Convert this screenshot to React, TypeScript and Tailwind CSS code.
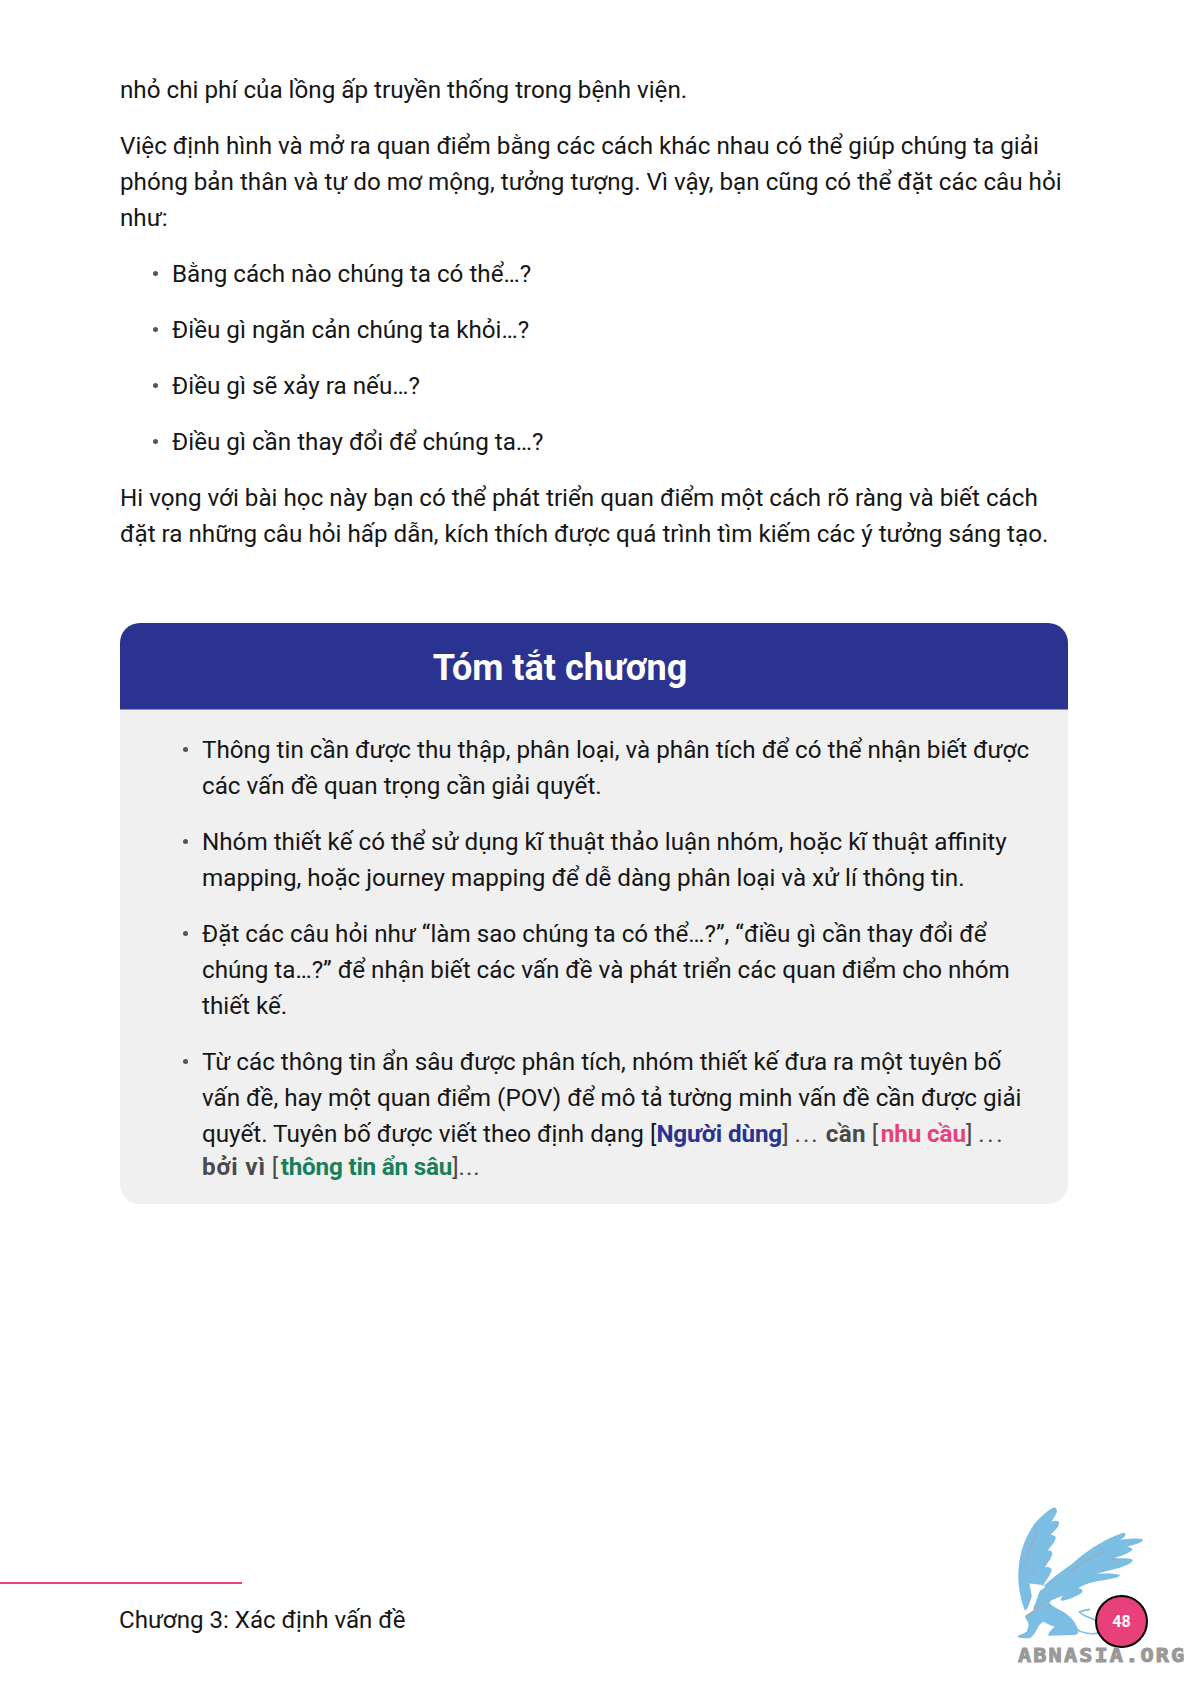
const bullets1 = [
  "Bằng cách nào chúng ta có thể…?",
  "Điều gì ngăn cản chúng ta khỏi…?",
  "Điều gì sẽ xảy ra nếu…?",
  "Điều gì cần thay đổi để chúng ta…?",
];

function Griffin() {
  return (
    <svg viewBox="0 0 633 612" className="absolute right-0 bottom-0 w-[211px] h-[204px]">
      <path fill="#7cbde3" d="M135 392 C118 350 112 300 116 265 C120 215 135 170 165 130 C185 108 205 90 222 82 C232 84 234 94 226 106 L215 125 C228 120 240 122 237 132 C234 145 222 152 212 165 C222 164 230 168 226 178 C222 192 210 200 203 212 C212 210 220 214 216 224 C212 240 200 250 195 262 C205 260 218 262 214 274 C208 290 200 300 192 312 C182 330 170 345 160 370 Z" />
      <path fill="#7cbde3" d="M200 310 C220 290 245 275 280 248 C320 212 385 170 432 158 C440 160 438 170 420 180 C445 176 475 174 488 178 C494 184 470 194 440 200 C455 202 462 208 452 214 C438 224 415 230 400 236 C425 234 460 234 458 242 C450 256 415 264 385 272 C365 277 352 280 350 281 C375 280 420 280 420 286 C415 296 375 300 340 306 C322 310 305 318 295 325 C305 326 312 332 305 338 C290 350 262 360 245 362 C238 358 245 350 252 345 C240 350 225 358 215 360 L205 372 L160 392 L165 340 Z" />
      <path fill="#7cbde3" d="M135 410 C155 398 180 382 205 365 C215 378 228 384 240 390 C262 402 278 416 285 430 C292 442 296 450 295 456 C294 462 290 464 280 465 L205 467 C204 458 214 448 225 440 C212 436 200 430 190 425 C182 430 178 434 175 440 C170 450 165 458 160 465 L150 475 C140 475 125 475 113 472 C112 468 116 466 120 465 C128 462 134 458 140 455 C144 445 146 438 145 430 C142 422 138 416 135 410 Z" />
      <path fill="none" stroke="#7cbde3" strokeWidth="5" strokeLinecap="round" d="M285 445 C305 460 335 465 362 458 M352 425 C335 412 310 410 298 396 C308 392 318 390 328 388" />
      <path fill="#ffffff" d="M148 310 C160 314 175 310 196 320 C190 328 184 328 180 332 C172 345 172 362 162 378 L140 390 C150 368 156 350 155 345 C152 335 152 325 148 310 Z" />
      <path fill="none" stroke="#a3a8b2" strokeWidth="4" strokeLinecap="round" d="M136 258 C145 220 158 180 172 158 M158 282 L168 262 M272 275 C300 250 335 228 370 218 M138 408 C160 395 180 380 198 362 M396 238 L408 236" />
    </svg>
  );
}

function Dot() {
  return <span className="shrink-0 mt-[15px] mr-[14px] w-[5px] h-[5px] rounded-full bg-[#555]" />;
}

export default function App() {
  return (
    <div className="relative w-[1191px] h-[1684px] flex flex-col bg-white overflow-hidden text-[24.22px] leading-[36px] text-[#161616] font-['Roboto',sans-serif]">
      <main className="pl-[120px] pr-[123px] pt-[72px]">
        <p>nhỏ chi phí của lồng ấp truyền thống trong bệnh viện.</p>
        <p className="mt-5">
          Việc định hình và mở ra quan điểm bằng các cách khác nhau có thể giúp chúng ta giải phóng bản thân và tự do mơ mộng, tưởng tượng. Vì vậy, bạn cũng có thể đặt các câu hỏi như:
        </p>
        <ul className="mt-5 pl-[33px] flex flex-col gap-5">
          {bullets1.map((b) => (
            <li key={b} className="flex">
              <Dot />
              <span>{b}</span>
            </li>
          ))}
        </ul>
        <p className="mt-5">
          Hi vọng với bài học này bạn có thể phát triển quan điểm một cách rõ ràng và biết cách đặt ra những câu hỏi hấp dẫn, kích thích được quá trình tìm kiếm các ý tưởng sáng tạo.
        </p>

        <section className="mt-[71px] h-[581px] rounded-[20px] bg-[#f0f0f0] overflow-hidden">
          <h2 className="h-[87px] pt-[4px] bg-[#2a3390] border-b border-[#8b90c8] flex items-center justify-center pr-[68px] text-[36px] font-bold text-white leading-none">
            Tóm tắt chương
          </h2>
          <ul className="pt-[22px] pl-[63px] pr-[30px] flex flex-col gap-5">
            <li className="flex">
              <Dot />
              <span>Thông tin cần được thu thập, phân loại, và phân tích để có thể nhận biết được các vấn đề quan trọng cần giải quyết.</span>
            </li>
            <li className="flex">
              <Dot />
              <span>Nhóm thiết kế có thể sử dụng kĩ thuật thảo luận nhóm, hoặc kĩ thuật affinity mapping, hoặc journey mapping để dễ dàng phân loại và xử lí thông tin.</span>
            </li>
            <li className="flex">
              <Dot />
              <span>Đặt các câu hỏi như “làm sao chúng ta có thể…?”, “điều gì cần thay đổi để chúng ta…?” để nhận biết các vấn đề và phát triển các quan điểm cho nhóm thiết kế.</span>
            </li>
            <li className="flex">
              <Dot />
              <div>
                <p>
                  Từ các thông tin ẩn sâu được phân tích, nhóm thiết kế đưa ra một tuyên bố vấn đề, hay một quan điểm (POV) để mô tả tường minh vấn đề cần được giải quyết. Tuyên bố được viết theo định dạng [<b className="text-[#2a3390] tracking-[-0.1px]">Người dùng</b>
                  <span className="text-[#4a4a4a]">] <span className="tracking-[2px]">...</span> <b className="tracking-[0.3px]">cần</b> <span className="tracking-[2.5px]">[</span></span>
                  <b className="text-[#e8407a] tracking-[-0.1px]">nhu cầu</b>
                  <span className="text-[#4a4a4a]">] <span className="tracking-[2.5px]">...</span></span>
                </p>
                <p className="-mt-[3px] text-[#4a4a4a]">
                  <b className="tracking-[0.8px]">bởi vì</b> <span className="tracking-[2.5px]">[</span><b className="text-[#16805a] tracking-[-0.2px]">thông tin ẩn sâu</b>]<span className="tracking-[1px]">...</span>
                </p>
              </div>
            </li>
          </ul>
        </section>
      </main>

      <footer className="mt-auto pb-[46px]">
        <div className="w-[242px] h-[2px] bg-[#e8407a]" />
        <p className="pl-[119px] mt-[18px] text-[24.1px]">Chương 3: Xác định vấn đề</p>
      </footer>

      <Griffin />
      <div className="absolute left-[1095px] top-[1595px] w-[53px] h-[53px] rounded-full bg-[#e8407a] border-2 border-black flex items-center justify-center text-white text-[16px] font-bold leading-none">
        48
      </div>
      <div className="absolute left-[1018px] top-[1642px] origin-left scale-x-[1.15] text-[19px] leading-[26px] font-bold text-[#999] tracking-[1.87px] [-webkit-text-stroke:1px_#999] font-['DejaVu_Sans_Mono',monospace]">
        ABNASIA.ORG
      </div>
    </div>
  );
}
